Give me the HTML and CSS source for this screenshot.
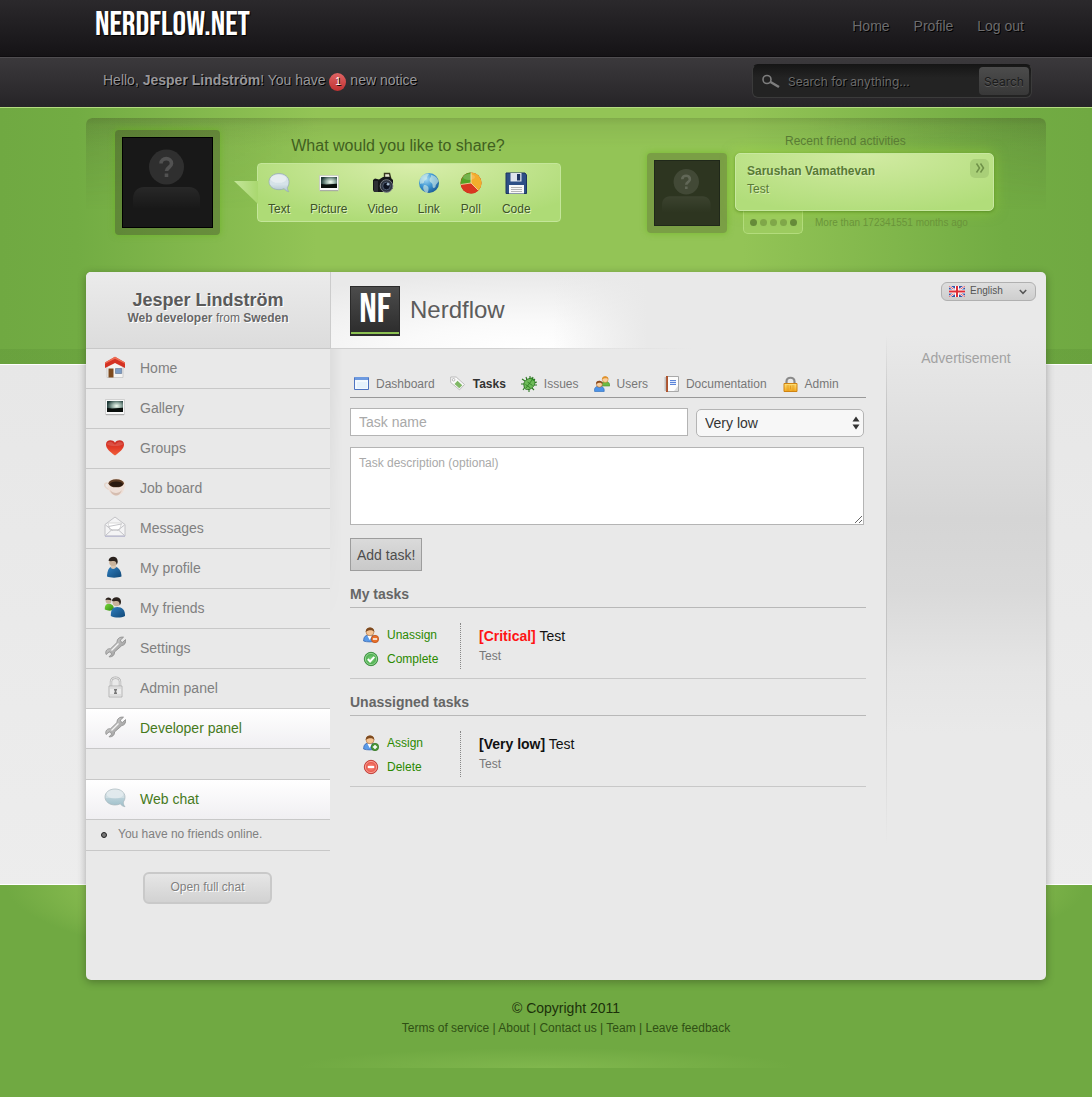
FILE: index.html
```html
<!DOCTYPE html>
<html lang="en">
<head>
<meta charset="utf-8">
<meta name="viewport" content="width=device-width, initial-scale=1">
<title>Nerdflow - Tasks</title>
<link rel="stylesheet" href="styles.css">
</head>
<body>
<svg class="sprite" width="0" height="0" aria-hidden="true">
  <defs>
    <linearGradient id="g-bubble" x2="0" y2="1"><stop offset="0" stop-color="#d3dfe3"/><stop offset=".5" stop-color="#cfdee3"/><stop offset=".52" stop-color="#b9d0d8"/><stop offset="1" stop-color="#9dbfca"/></linearGradient>
    <linearGradient id="g-bubble2" x2="0" y2="1"><stop offset="0" stop-color="#d5e0e6"/><stop offset=".6" stop-color="#d6e3e9"/><stop offset="1" stop-color="#adc2cc"/></linearGradient>
    <radialGradient id="g-photo" cx=".6" cy=".45" r=".6"><stop offset="0" stop-color="#f4fff4"/><stop offset=".5" stop-color="#8fa89f"/><stop offset="1" stop-color="#1f3a38"/></radialGradient>
    <radialGradient id="g-globe" cx=".35" cy=".3" r=".8"><stop offset="0" stop-color="#a8dcf5"/><stop offset=".5" stop-color="#3e96d2"/><stop offset="1" stop-color="#14538f"/></radialGradient>
    <linearGradient id="g-heart" x2="0" y2="1"><stop offset="0" stop-color="#c92a22"/><stop offset=".5" stop-color="#e23c28"/><stop offset="1" stop-color="#f0603a"/></linearGradient>
    <linearGradient id="g-blue" x2="1" y2="1"><stop offset="0" stop-color="#2f7fc0"/><stop offset="1" stop-color="#114877"/></linearGradient>
    <linearGradient id="g-green" x2="1" y2="1"><stop offset="0" stop-color="#7cd83c"/><stop offset="1" stop-color="#2f8a10"/></linearGradient>
    <linearGradient id="g-steel" x2="1" y2="1"><stop offset="0" stop-color="#e4e4e4"/><stop offset=".5" stop-color="#b4b4b4"/><stop offset="1" stop-color="#8f8f8f"/></linearGradient>
    <linearGradient id="g-gold" x2="0" y2="1"><stop offset="0" stop-color="#ffe27a"/><stop offset="1" stop-color="#f5a81d"/></linearGradient>
    <linearGradient id="g-body" x2="0" y2="1"><stop offset="0" stop-color="#fff" stop-opacity=".07"/><stop offset="1" stop-color="#fff" stop-opacity="0"/></linearGradient>
    <radialGradient id="g-ok"><stop offset="0" stop-color="#7ed07a"/><stop offset="1" stop-color="#3fa443"/></radialGradient>
    <radialGradient id="g-no"><stop offset="0" stop-color="#ff8d7d"/><stop offset="1" stop-color="#e04a40"/></radialGradient>
  </defs>
  <symbol id="i-bubble" viewBox="0 0 22 22"><path d="M11 2C5.500 2 1 5.400 1 10s4.500 8 10 8c2 0 3.800-.4 5.300-1.200 1 1.600 2.700 2.700 4.700 2.900-1.200-1.200-1.700-2.800-1.700-4.700 1.100-1.400 1.700-3.100 1.700-5C21 5.400 16.500 2 11 2z" fill="url(#g-bubble)" stroke="#a5b4ba" stroke-width=".7"/><ellipse cx="11" cy="7" rx="8.500" ry="4.500" fill="#fff" opacity=".35"/></symbol>
  <symbol id="i-bubble-light" viewBox="0 0 22 22"><path d="M11 1.500C5.500 1.500 1 5 1 9.700s4.500 8 10 8c2 0 3.700-.3 5.200-1 1.200 1.700 2.600 2.600 4.600 3-1-1.300-1.500-2.700-1.400-4.300 1.100-1.500 1.600-3.600 1.600-5.700 0-4.700-4.500-8.200-10-8.200z" fill="url(#g-bubble2)" stroke="#94a7b5" stroke-width=".7"/><ellipse cx="10.500" cy="6.800" rx="8" ry="4" fill="#fff" opacity=".4"/></symbol>
  <symbol id="i-photo" viewBox="0 0 22 22"><path d="M1.500 3.500h19v15h-19z" fill="#f9f9f9" stroke="#bcbcbc" stroke-width=".6"/><path d="M2 18.700h18" stroke="#999" stroke-width=".8"/><path d="M3 5h16v11H3z" fill="url(#g-photo)"/><path d="M3 12l5 .5 11-.8V16H3z" fill="#0a0f0d"/></symbol>
  <symbol id="i-camera" viewBox="0 0 22 22"><path d="M12.500 1.500h5l1 4h-6z" fill="#e8e8d8" stroke="#383820" stroke-width="1.400"/><path d="M1 8l2-1.500 4 1 4-2.500h7l3 3v8l-4 4H2l-1-2z" fill="#15161a"/><path d="M2 9h4v11H2z" fill="#2d2e34"/><circle cx="14.500" cy="14" r="6.300" fill="#303641" stroke="#777c84"/><circle cx="14.500" cy="14" r="3.800" fill="#0d1220" stroke="#4e5a70"/><circle cx="16" cy="12.200" r="1.300" fill="#a9bdd2"/></symbol>
  <symbol id="i-globe" viewBox="0 0 22 22"><circle cx="11" cy="11" r="10" fill="url(#g-globe)"/><path d="M3 5c3-3 6-3.500 8-3-1 2-2 2-2 4s-3 2-3 4-2 1-4 2c0-3-.3-5 1-7zM13 3c4 .3 6.500 3 7.500 6-1 3-3 3-3 6-2 2-3 1-3-2s-3-2-3-5 2-2 1.500-5zM6 13c3 0 5 2 4.500 4 0 2-.5 3-1.500 4-3-1-5-5-3-8z" fill="#dbf0e6" opacity=".6"/></symbol>
  <symbol id="i-pie" viewBox="0 0 22 22"><circle cx="11" cy="11" r="10.500" fill="#ba2812"/><path d="M11 11V.5A10.500 10.500 0 0 1 18.400 18.400z" fill="#f3ad2c"/><path d="M11 11V.5A10.500 10.500 0 0 0 .8 12.500z" fill="#55a325"/><path d="M11 11L.8 12.500A10.500 10.500 0 0 0 18.400 18.400z" fill="#d93720"/><path d="M11 11V.5M11 11L.8 12.500M11 11l7.400 7.400" stroke="#f7e6b0" stroke-width=".8"/><ellipse cx="9" cy="5" rx="6" ry="3" fill="#fff" opacity=".18"/></symbol>
  <symbol id="i-floppy" viewBox="0 0 22 22"><path d="M1 1h19l1.500 2v18.500H1z" fill="#2d4f86" stroke="#1d355f"/><path d="M5.500 1h11v8.500h-11z" fill="#dfe5ec"/><path d="M12 2h3.200v6.500H12z" fill="#1f3563"/><path d="M4 13h15v8.500H4z" fill="#f8f8f8"/><path d="M6 15.500h11M6 17.500h11M6 19.500h11" stroke="#b5b5b5"/></symbol>
  <symbol id="i-home" viewBox="0 0 22 22"><path d="M3 10l8-6 8 6v11.500H3z" fill="#f4f3f1" stroke="#bbb" stroke-width=".6"/><path d="M4.500 12.500h5v9h-5z" fill="#7d4a1e"/><path d="M11.500 12.500h6.200v5h-6.200z" fill="#7c9cc4" stroke="#5a6f8f" stroke-width=".6"/><path d="M11 .8L1 6.500V12l10-5 10 5V6.500z" fill="#d43223"/><path d="M11 .8L1 6.500v1.200L11 2.800l10 4.900V6.500z" fill="#ef6f56"/></symbol>
  <symbol id="i-heart" viewBox="0 0 22 22"><path d="M11 19.500C6 16 2 12.500 2 8.500c0-4.800 6.500-5.500 9-1.800 2.500-3.700 9-3 9 1.800 0 4-4 7.500-9 11z" fill="url(#g-heart)"/><path d="M3 8.500c0-3 4.500-3.700 6.500-1 .8 1.300 2.200 1.300 3 0 2-2.700 6.500-2 6.500 1-5 2-11 2-16 0z" fill="#fff" opacity=".15"/></symbol>
  <symbol id="i-cup" viewBox="0 0 22 22"><path d="M4.500 7.500C1 5.500-.5 9 2 11.500c1.500 1.500 4 2.500 6 2" fill="none" stroke="#e5d6cc" stroke-width="1.500"/><path d="M3.500 7.500c0 7.500 3.500 12 9 12s8.500-5 8.500-12z" fill="#eedfd7"/><path d="M6 14c3 4 9 4 12 0-1.500 4-3.500 5.500-5.700 5.500S7.300 18 6 14z" fill="#d5bdb0"/><ellipse cx="12.200" cy="7.500" rx="8.800" ry="5" fill="#f2e5dc"/><ellipse cx="12.200" cy="7.300" rx="7.700" ry="4" fill="#5c3a22"/><ellipse cx="12.400" cy="8.300" rx="6.500" ry="2.800" fill="#2b190e"/></symbol>
  <symbol id="i-mail" viewBox="0 0 22 22"><path d="M1 8.500L11 1l10 7.500V20H1z" fill="#f4f4f5" stroke="#bdbdc2" stroke-width=".9"/><path d="M4 7h13.500l-2 7H6z" fill="#fff" stroke="#ccc" stroke-width=".7"/><path d="M4.500 10.500l13-2.500M1.500 9l7 5.500M20.500 9l-7 5.500M1.500 19.500l6-5.500h7l6 5.500" fill="none" stroke="#bdbdc2" stroke-width=".9"/><path d="M1 20.200h20" stroke="#b4b4d0"/></symbol>
  <symbol id="i-user" viewBox="0 0 22 22"><path d="M3 20.500c0-3 1-8 3.500-9.500h6c3.500 1.500 5 6 5 9.500-4 1.500-11 1.500-14.500 0z" fill="url(#g-blue)"/><path d="M6.500 11c1 2.500 4 2.500 6 0l-1-3h-4z" fill="#d8c6b2"/><circle cx="9" cy="6" r="3.900" fill="#c9b39c"/><path d="M4.500 4.800C5-.2 13.500-.8 13.700 5.200c0 2-.7 3-1.200 3.500 0-2.500-.8-3.700-2.700-3.700-2 0-3.300.4-5.300-.2z" fill="#2b221d"/></symbol>
  <symbol id="i-friends" viewBox="0 0 22 22"><path d="M.8 13.500C.8 9.500 2 7.800 5 7.800s5 2.200 5 5.700c-2.500 1.500-6.500 1.500-9.200 0z" fill="url(#g-green)"/><circle cx="4.500" cy="5" r="2.800" fill="#c9b39c"/><path d="M1.500 4.300c0-4 6-3.800 6 .3-2-.8-4-1.200-6-.3z" fill="#2b221d"/><path d="M6.800 20c0-6 1.700-9 6.500-9s8 3 7.700 9c-4 2-10 2-14.200 0z" fill="url(#g-blue)"/><circle cx="12.500" cy="6.300" r="3.900" fill="#c9b39c"/><path d="M8 5C8 0 17 0 17 5.800c0 2-.8 3-1.300 3.500 0-3-1-4.300-3-4.300-2 0-2.700.4-4.700 0z" fill="#2b221d"/></symbol>
  <symbol id="i-wrench" viewBox="0 0 22 22"><path d="M19.500 1.200l-3.200 3 .7 1.600 1.500.6 3-2.800c.7 3.200-1 5.700-3.700 6L10.500 16c.3 3-2.300 5.300-5.500 4.800l2.600-2.600-.8-1.700-1.700-.6-3 2.600c-1.300-3.500 1.200-6.200 4.500-5.800L13 6.500C12.800 2.700 16 .5 19.500 1.200z" fill="url(#g-steel)" stroke="#8a8a8a" stroke-width=".8"/><path d="M7.500 14.500l7-7" stroke="#f4f4f4" stroke-width="1.200"/></symbol>
  <symbol id="i-lock" viewBox="0 0 22 22"><path d="M7 10V5.500c0-5 9-5 9 0V10" fill="none" stroke="#b0b0b0" stroke-width="2.400"/><path d="M7 10V5.500c0-5 9-5 9 0V10" fill="none" stroke="#eee" stroke-width="1"/><path d="M5 10h13v11H5z" fill="#ececec" stroke="#a9a9a9" stroke-width=".8"/><path d="M6 12h11M6 19h11" stroke="#cfcfcf"/><path d="M10 13h3v1.500h-.7v2h.7V18h-3v-1.500h.7v-2H10z" fill="#777"/></symbol>
  <symbol id="i-window" viewBox="0 0 16 16"><path d="M1.500 1.500h14v12h-14z" fill="#f3f9fe" stroke="#4d74c2"/><path d="M2 1h13v3H2z" fill="#6d9ae0"/><path d="M4 6h10v6H4z" fill="#dcecfa" opacity=".6"/></symbol>
  <symbol id="i-tag" viewBox="0 0 16 16"><path d="M.7 1h5.500l8.300 7.500-5 5.300L.7 6.500z" fill="#fafafa" stroke="#b5b5b5" stroke-width=".9"/><circle cx="3.600" cy="3.800" r="1.300" fill="#fff" stroke="#aaa" stroke-width=".8"/><path d="M7.500 4.700l4.800 4.600-3 3-4.800-4.300z" fill="#7fb765"/></symbol>
  <symbol id="i-bug" viewBox="0 0 16 16"><path d="M1 3l3 2M0 8h3M2 14l2-3M8 16v-3M13 14l-2-2M16 9h-3M14 3l-2 2M9 0v3M5 1l1 3M12 1l-1 3M16 6l-3 1" stroke="#2d7a22" stroke-width="1.100"/><path d="M3 10c-1-5 3-7.500 8-8 3 2 3.500 4 2.500 6.500C12 12 9 14 5.500 13.500 4 13 3.200 12 3 10z" fill="#6dbb58" stroke="#1f6518" stroke-width=".8"/><path d="M5 12l6-8M4.500 8.500l5 3.500M6.500 6l5 3.500" stroke="#2b7a22" stroke-width=".8"/><path d="M9 2.500c2-.8 4 .5 4.500 3z" fill="#2c8a22"/></symbol>
  <symbol id="i-users" viewBox="0 0 16 16"><path d="M7 10c0-3 1-4.500 4.300-4.500 3 0 4.700 1.500 4.500 4.500z" fill="#6cb944" stroke="#47902a" stroke-width=".6"/><circle cx="11.200" cy="3.600" r="2.900" fill="#f9cf9e" stroke="#c97d20" stroke-width=".5"/><path d="M8 3.600C7.500-.8 14.500-1 14.500 3.400c-1-1.500-4.500-1.500-6.500.2z" fill="#e0912a"/><path d="M.6 15.500c-.6-4 1.400-5.300 4.600-5.300s5.400 1.300 5 5.300z" fill="#4c93e8" stroke="#2768b9" stroke-width=".6"/><circle cx="5.400" cy="8.300" r="3" fill="#f9cf9e" stroke="#8c4a1d" stroke-width=".5"/><path d="M2 8.300c-.6-4.600 7-4.600 6.700 0-1.500-2-4.500-2-6.700 0z" fill="#8c4a1d"/></symbol>
  <symbol id="i-doc" viewBox="0 0 16 16"><path d="M3.500.5h12v15h-12z" fill="#fcfcfc" stroke="#a9a9a9"/><path d="M3 0h2v16H3z" fill="#b0522a"/><path d="M1.500 2h2M1.500 4h2M1.500 6h2M1.500 8h2M1.500 10h2M1.500 12h2M1.500 14h2" stroke="#888" stroke-width=".8"/><path d="M7 4h6v5H7z" fill="#5b84d8"/><path d="M7 5.500h6M7 7.500h6" stroke="#dbe6fb"/><path d="M11 15l4-5v5z" fill="#ddd"/></symbol>
  <symbol id="i-padlock" viewBox="0 0 16 16"><path d="M4.500 8V5.500c0-5 8-5 8 0V8" fill="none" stroke="#8a8a8a" stroke-width="2.200"/><path d="M2 7.500h13v8H2z" fill="url(#g-gold)" stroke="#cf8312"/><path d="M4.500 10h3M9.500 10h3M4.500 12h3M9.500 12h3M4.500 14h3M9.500 14h3M8.500 9.500v4" stroke="#e0981c" stroke-width=".9"/></symbol>
  <symbol id="i-man" viewBox="0 0 16 16"><path d="M.6 14c0-4.500 2-6 6-6s6 2 6 6c-3 1.200-9 1.200-12 0z" fill="#5b9be8" stroke="#2c5fae" stroke-width=".7"/><path d="M4.300 8.500L6.700 13l2.400-4.500z" fill="#fff"/><circle cx="7" cy="4.800" r="4" fill="#f6c594" stroke="#a66a35" stroke-width=".6"/><path d="M2.800 5C2-1 12-1 11.200 5c-.8-2-6-2.500-8.400 0z" fill="#7d4a20"/></symbol>
  <symbol id="i-unassign" viewBox="0 0 16 16"><use href="#i-man"/><circle cx="12" cy="12" r="3.700" fill="#e8702a" stroke="#b94c12" stroke-width=".7"/><path d="M9.900 12h4.200" stroke="#fff" stroke-width="1.500"/></symbol>
  <symbol id="i-assign" viewBox="0 0 16 16"><use href="#i-man"/><circle cx="12" cy="12" r="3.700" fill="#4f9a3a" stroke="#2f6f20" stroke-width=".7"/><path d="M9.900 12h4.200M12 9.900v4.200" stroke="#fff" stroke-width="1.500"/></symbol>
  <symbol id="i-ok" viewBox="0 0 16 16"><circle cx="8" cy="8" r="6.700" fill="url(#g-ok)" stroke="#3a8a3e" stroke-width=".9"/><circle cx="8" cy="8" r="5.600" fill="none" stroke="#b5e6b0" stroke-width=".7"/><path d="M4.800 8l2.300 2.500 4.200-4.700" fill="none" stroke="#fff" stroke-width="2"/></symbol>
  <symbol id="i-no" viewBox="0 0 16 16"><circle cx="8" cy="8" r="6.700" fill="url(#g-no)" stroke="#c03a34" stroke-width=".9"/><circle cx="8" cy="8" r="5.600" fill="none" stroke="#ffc0b5" stroke-width=".7"/><path d="M4.800 8h6.400" stroke="#fff" stroke-width="2.200"/></symbol>
  <symbol id="i-flag" viewBox="0 0 16 11"><path d="M0 0h16v11H0z" fill="#3455a8"/><path d="M0 0l16 11M16 0L0 11" stroke="#fff" stroke-width="2.200"/><path d="M0 0l16 11M16 0L0 11" stroke="#dd3a44" stroke-width=".8"/><path d="M8 0v11M0 5.500h16" stroke="#fff" stroke-width="4"/><path d="M8 0v11M0 5.500h16" stroke="#de2d38" stroke-width="2"/></symbol>
  <symbol id="i-search" viewBox="0 0 18 15"><circle cx="5" cy="5.500" r="4" fill="none" stroke="#7e7e7e" stroke-width="1.600"/><path d="M8.500 8l8.500 5" stroke="#7e7e7e" stroke-width="2.600"/></symbol>
  <symbol id="i-person" viewBox="0 0 91 91"><circle cx="44.500" cy="30" r="17.500" fill="#fff" fill-opacity=".1"/><path d="M11 72V62c0-7 4-12 11-12h45c7 0 11 5 11 12v10z" fill="url(#g-body)"/><path d="M39 26.500c0-6.500 10.500-6.500 10.500 0 0 4-5 4-5 7.500M44.500 36.500v3.500" fill="none" stroke="#fff" stroke-opacity=".17" stroke-width="3.600"/></symbol>
</svg>

<header class="topbar">
  <div class="wrap topbar-row">
    <a class="wordmark" href="#">NERDFLOW.NET</a>
    <nav class="topnav" aria-label="Account">
      <a href="#">Home</a>
      <a href="#">Profile</a>
      <a href="#">Log out</a>
    </nav>
  </div>
</header>

<div class="subbar">
  <div class="wrap subbar-row">
    <p class="greeting">Hello, <b>Jesper Lindström</b>! You have <a class="badge" href="#">1</a> new notice</p>
    <form class="search" role="search">
      <svg width="18" height="15" aria-hidden="true"><use href="#i-search"/></svg>
      <input type="search" aria-label="Search" placeholder="Search for anything...">
      <button type="button">Search</button>
    </form>
  </div>
</div>

<div class="stage">
  <section class="wrap hero">
    <div class="avatar"><svg width="91" height="91" aria-hidden="true"><use href="#i-person"/></svg></div>
    <div class="share">
      <h2>What would you like to share?</h2>
      <div class="share-box">
        <a href="#"><svg width="22" height="22"><use href="#i-bubble-light"/></svg>Text</a>
        <a href="#"><svg width="22" height="22"><use href="#i-photo"/></svg>Picture</a>
        <a href="#"><svg width="22" height="22"><use href="#i-camera"/></svg>Video</a>
        <a href="#"><svg width="22" height="22"><use href="#i-globe"/></svg>Link</a>
        <a href="#"><svg width="22" height="22"><use href="#i-pie"/></svg>Poll</a>
        <a href="#"><svg width="22" height="22"><use href="#i-floppy"/></svg>Code</a>
      </div>
    </div>
    <div class="recent">
      <h2>Recent friend activities</h2>
      <div class="recent-row">
        <div class="avatar avatar-small"><svg width="66" height="66" aria-hidden="true"><use href="#i-person"/></svg></div>
        <div class="activity">
          <div class="activity-card">
            <div>
              <b>Sarushan Vamathevan</b>
              <p>Test</p>
            </div>
            <button type="button" aria-label="Next activity"><svg width="10" height="10" viewBox="0 0 10 10"><path d="M1.500.5L4.500 5l-3 4.500M5.500.5L8.500 5l-3 4.500" fill="none" stroke="#6f9148" stroke-width="1.500"/></svg></button>
          </div>
          <div class="activity-foot">
            <span class="dots"><i class="on"></i><i></i><i></i><i></i><i class="on"></i></span>
            <small>More than 172341551 months ago</small>
          </div>
        </div>
      </div>
    </div>
  </section>

  <div class="wrap panel">
    <aside class="sidebar">
      <div class="profile">
        <h1>Jesper Lindström</h1>
        <p><b>Web developer</b> from <b>Sweden</b></p>
      </div>
      <nav class="menu" aria-label="Main">
        <a href="#"><svg width="22" height="22"><use href="#i-home"/></svg>Home</a>
        <a href="#"><svg width="22" height="22"><use href="#i-photo"/></svg>Gallery</a>
        <a href="#"><svg width="22" height="22"><use href="#i-heart"/></svg>Groups</a>
        <a href="#"><svg width="22" height="22"><use href="#i-cup"/></svg>Job board</a>
        <a href="#"><svg width="22" height="22"><use href="#i-mail"/></svg>Messages</a>
        <a href="#"><svg width="22" height="22"><use href="#i-user"/></svg>My profile</a>
        <a href="#"><svg width="22" height="22"><use href="#i-friends"/></svg>My friends</a>
        <a href="#"><svg width="22" height="22"><use href="#i-wrench"/></svg>Settings</a>
        <a href="#"><svg width="22" height="22"><use href="#i-lock"/></svg>Admin panel</a>
        <a class="active" href="#"><svg width="22" height="22"><use href="#i-wrench"/></svg>Developer panel</a>
      </nav>
      <div class="menu chat">
        <a class="active" href="#"><svg width="22" height="22"><use href="#i-bubble"/></svg>Web chat</a>
        <p class="status">You have no friends online.</p>
        <button type="button">Open full chat</button>
      </div>
    </aside>

    <main class="content">
      <div class="project">
        <span class="project-logo">NF</span>
        <h2>Nerdflow</h2>
      </div>
      <nav class="tabs" aria-label="Project">
        <a href="#"><svg width="16" height="16"><use href="#i-window"/></svg>Dashboard</a>
        <a class="active" href="#"><svg width="16" height="16"><use href="#i-tag"/></svg>Tasks</a>
        <a href="#"><svg width="16" height="16"><use href="#i-bug"/></svg>Issues</a>
        <a href="#"><svg width="16" height="16"><use href="#i-users"/></svg>Users</a>
        <a href="#"><svg width="16" height="16"><use href="#i-doc"/></svg>Documentation</a>
        <a href="#"><svg width="16" height="16"><use href="#i-padlock"/></svg>Admin</a>
      </nav>
      <form class="task-form">
        <div class="task-line">
          <input type="text" aria-label="Task name" placeholder="Task name">
          <div class="priority">
            <select aria-label="Priority"><option>Very low</option><option>Critical</option></select>
            <svg width="8" height="14" viewBox="0 0 8 14" aria-hidden="true"><path d="M4 .5L7.500 5.500h-7zM4 13.500L.5 8.500h7z" fill="#333"/></svg>
          </div>
        </div>
        <textarea aria-label="Task description" placeholder="Task description (optional)"></textarea>
        <button type="button">Add task!</button>
      </form>

      <section class="tasks">
        <h3>My tasks</h3>
        <article class="task">
          <div class="task-actions">
            <a href="#"><svg width="16" height="16"><use href="#i-unassign"/></svg>Unassign</a>
            <a href="#"><svg width="16" height="16"><use href="#i-ok"/></svg>Complete</a>
          </div>
          <div class="task-text">
            <h4><b class="critical">[Critical]</b> Test</h4>
            <p>Test</p>
          </div>
        </article>
      </section>
      <section class="tasks">
        <h3>Unassigned tasks</h3>
        <article class="task">
          <div class="task-actions">
            <a href="#"><svg width="16" height="16"><use href="#i-assign"/></svg>Assign</a>
            <a href="#"><svg width="16" height="16"><use href="#i-no"/></svg>Delete</a>
          </div>
          <div class="task-text">
            <h4><b>[Very low]</b> Test</h4>
            <p>Test</p>
          </div>
        </article>
      </section>
    </main>

    <aside class="side">
      <div class="language">
        <svg width="16" height="11" aria-hidden="true"><use href="#i-flag"/></svg>
        <select aria-label="Language"><option>English</option><option>Svenska</option></select>
        <svg width="8" height="6" viewBox="0 0 8 6" aria-hidden="true"><path d="M.8 1l3.200 3.300L7.200 1" fill="none" stroke="#555" stroke-width="1.500"/></svg>
      </div>
      <div class="ad">Advertisement</div>
    </aside>
  </div>

  <footer class="wrap footer">
    <p class="copyright">© Copyright 2011</p>
    <p class="legal"><a href="#">Terms of service</a> | <a href="#">About</a> | <a href="#">Contact us</a> | <a href="#">Team</a> | <a href="#">Leave feedback</a></p>
  </footer>
</div>
</body>
</html>
```
FILE: styles.css
```css
*, ::before { box-sizing: border-box; }

body {
  margin: 0;
  min-height: 100vh;
  display: flex;
  flex-direction: column;
  background: #70a942;
  color: #777;
  font: 14px/20px Arial, "Liberation Sans", sans-serif;
}

h1, h2, h3, h4, p { margin: 0; font-weight: normal; }
a { color: inherit; text-decoration: none; }
button, input, select, textarea { font: inherit; color: inherit; margin: 0; }
button { cursor: pointer; }
svg { flex: none; display: block; }
.sprite { position: absolute; }

.wrap {
  width: calc(100% - 132px);
  max-width: 960px;
  margin: 0 auto;
  position: relative;
  left: 20px;
}

/* Header bars */
.topbar {
  background: linear-gradient(#2b292c, #151316);
  border-bottom: 1px solid #0e0c0f;
}
.topbar-row {
  display: flex;
  justify-content: space-between;
  height: 56px;
  padding: 0 22px 0 9px;
}
.wordmark {
  color: #fff;
  font: 34px/50px "Bebas Neue", "Roboto Condensed", "Open Sans Condensed", "Liberation Sans Narrow", "Liberation Sans", sans-serif;
  text-shadow: 1px 1px 1px #000;
}
.topnav {
  display: flex;
  gap: 24px;
  padding-top: 16px;
  color: #6d6c6e;
  text-shadow: 1px 1px 0 #000;
}
.subbar {
  background: linear-gradient(#3b393c, #262427);
  border-top: 1px solid #4f4d50;
  border-bottom: 1px solid #b4dc80;
}
.subbar-row {
  display: flex;
  justify-content: space-between;
  align-items: flex-start;
  height: 49px;
  padding: 6px 14px 0 17px;
}
.greeting {
  padding-top: 6px;
  color: #98979a;
  text-shadow: 1px 1px 0 #000;
}
.badge {
  display: inline-block;
  width: 17px;
  height: 18px;
  border-radius: 50%;
  background: linear-gradient(#e06464, #c03232);
  color: #fff;
  font-size: 10px;
  line-height: 17px;
  text-align: center;
}
.search {
  display: flex;
  align-items: center;
  width: 280px;
  height: 34px;
  padding: 0 2px 0 9px;
  border: 1px solid #3b3b3b;
  border-top-color: #151515;
  border-radius: 6px;
  background: linear-gradient(#161616, #232323 40%);
  font: 12px/16px Inter, sans-serif;
}
.search input {
  flex: 1;
  min-width: 0;
  padding: 1px 8px 0;
  border: 0;
  outline: 0;
  background: none;
  color: #999;
}
.search input::placeholder { color: #6b6b6b; opacity: 1; text-shadow: 1px 1px 0 #000; }
.search button {
  width: 50px;
  height: 28px;
  padding: 1px 0 0;
  border: 0;
  border-radius: 4px;
  background: linear-gradient(#4c4c4c, #383838);
  color: #1a1a1a;
  text-shadow: 0 1px 0 #5a5a5a;
}

/* Coloured bands behind the page */
.stage {
  flex: 1;
  background:
    radial-gradient(ellipse 250px 20px at 50% 100%, rgba(160, 210, 100, .35), transparent) 50% calc(100% - 29px) / 520px 20px no-repeat,
    linear-gradient(rgba(0, 40, 0, .06), rgba(0, 40, 0, .06)) 0 241px / 100% 15px no-repeat,
    linear-gradient(90deg, #70a942, #72ac43 7%, #93c456 29%, #93c456 68%, #72ac43 92%, #70a942) 0 0 / 100% 256px no-repeat,
    radial-gradient(ellipse 540px 100px at 50% 0, #93c456 75%, #70a942) 0 100% / 100% 212px no-repeat,
    linear-gradient(#fff, #fff) 0 100% / 100% 213px no-repeat,
    linear-gradient(#fff 257px, #e7e7e7 257px, #ebebeb 600px, #efefef);
}

/* Share and activity strip */
.hero {
  display: flex;
  align-items: flex-start;
  height: 154px;
  margin-top: 10px;
  padding: 12px 52px 0 29px;
}
.hero::before {
  content: "";
  position: absolute;
  inset: 0;
  border-radius: 6px 6px 0 0;
  background:
    linear-gradient(rgba(60, 70, 30, .2), rgba(60, 70, 30, .08) 8px, transparent 30px),
    linear-gradient(90deg, rgba(60, 70, 40, .18), transparent 25%, transparent 75%, rgba(60, 70, 40, .18));
  -webkit-mask-image: linear-gradient(#000, transparent 60%);
  mask-image: linear-gradient(#000, transparent 60%);
}
.hero > * { position: relative; }
.avatar {
  padding: 7px;
  border-radius: 4px;
  background: rgba(65, 80, 35, .42);
  box-shadow: 0 0 6px rgba(100, 180, 20, .6);
}
.avatar svg { background: #181818; outline: 1px solid #000; outline-offset: -1px; }
.avatar-small { align-self: flex-start; background: rgba(85, 105, 45, .4); }
.avatar-small svg { background: #2d3520; outline-color: #20281a; }
.share { width: 304px; margin-left: 37px; padding-top: 6px; }
.share h2 {
  margin-bottom: 7px;
  padding-right: 22px;
  color: #41601f;
  font-size: 16px;
  text-align: center;
}
.share-box {
  position: relative;
  display: flex;
  gap: 20px;
  height: 59px;
  padding: 8px 0 0 10px;
  border: 1px solid #c4e69a;
  border-radius: 4px;
  background: radial-gradient(ellipse 190px 60px at 52% 0, #d9eeac, #aedb76);
  color: #3c5426;
  font-size: 12px;
  line-height: 16px;
  text-shadow: 1px 1px 0 #dff2c0;
}
.share-box::before {
  content: "";
  position: absolute;
  left: -24px;
  top: 17px;
  width: 24px;
  height: 23px;
  background: linear-gradient(90deg, #c4e69a, #a9d76f);
  clip-path: polygon(0 0, 100% 0, 100% 100%);
}
.share-box a { display: flex; flex-direction: column; align-items: center; gap: 7px; }
.recent { margin-left: auto; padding-top: 3px; color: #587a35; font-size: 12px; line-height: 16px; }
.recent h2 { margin-bottom: 4px; padding-left: 138px; font-size: 12px; }
.recent-row { display: flex; gap: 8px; }
.activity { width: 259px; }
.activity-card {
  position: relative;
  display: flex;
  justify-content: space-between;
  align-items: flex-start;
  height: 58px;
  padding: 5px 4px 0 11px;
  border: 1px solid #c8e8a0;
  border-radius: 5px;
  background: radial-gradient(ellipse 190px 60px at 50% 0, #d2eba3, #b1dd7a);
  box-shadow: 0 1px 3px rgba(50, 100, 10, .5), 0 0 14px rgba(160, 220, 50, .5);
  text-shadow: 1px 1px 0 #d9efb8;
}
.activity-card div { padding-top: 3px; line-height: 18px; }
.activity-card button {
  display: grid;
  place-items: center;
  width: 19px;
  height: 19px;
  padding: 0 0 2px;
  border: 0;
  border-radius: 5px;
  background: #a9cf78;
}
.activity-foot { display: flex; gap: 12px; padding-left: 8px; }
.dots {
  display: flex;
  justify-content: center;
  align-items: center;
  gap: 3px;
  width: 60px;
  height: 23px;
  border: 1px solid #b3dc7c;
  border-top: 0;
  border-radius: 0 0 5px 5px;
  background: #9ccb5f;
}
.dots i { width: 7px; height: 7px; border-radius: 50%; background: #7fa74a; }
.dots .on { background: #658a3a; }
.activity-foot small { padding-top: 4px; color: #6a933b; font-size: 10px; }

/* Main panel */
.panel {
  display: flex;
  border-radius: 5px;
  background: #e9e9e9;
  box-shadow: 0 2px 8px rgba(0, 0, 0, .3);
}
.sidebar { width: 244px; flex: none; padding-bottom: 76px; }
.profile {
  height: 77px;
  padding-top: 18px;
  border-bottom: 1px solid #c8c8c8;
  border-radius: 5px 0 0 0;
  background: linear-gradient(#ebebeb, #dcdcdc);
  color: #666;
  font-size: 12px;
  line-height: 16px;
  text-align: center;
  text-shadow: 1px 1px 0 #fff;
}
.profile h1 { color: #5a5a5a; font-size: 18px; font-weight: bold; line-height: 20px; }
.menu a {
  display: flex;
  align-items: center;
  gap: 14px;
  height: 40px;
  padding: 0 18px 2px;
  border-bottom: 1px solid #c8c8c8;
  color: #808080;
}
.menu svg { margin-bottom: 2px; }
.menu .active { background: linear-gradient(#fff, #f0eff2); color: #467a1c; }
.chat { margin-top: 30px; border-top: 1px solid #c8c8c8; }
.status {
  position: relative;
  height: 31px;
  padding: 6px 0 0 32px;
  border-bottom: 1px solid #c8c8c8;
  color: #808080;
  font-size: 12px;
  line-height: 16px;
}
.status::before {
  content: "";
  position: absolute;
  left: 15px;
  top: 12px;
  width: 6px;
  height: 6px;
  border: 1px solid #222;
  border-radius: 50%;
  background: #777;
}
.chat button {
  display: block;
  width: 129px;
  height: 32px;
  margin: 21px 0 0 57px;
  padding: 0 0 3px;
  border: 2px solid #c9c9c9;
  border-radius: 6px;
  background: linear-gradient(#e6e6e6, #d2d2d2);
  color: #808080;
  font-size: 12px;
  line-height: 16px;
  text-shadow: 1px 1px 0 #fff;
}

.content {
  position: relative;
  flex: 1;
  min-width: 0;
  padding: 0 20px;
}
.content::before {
  content: "";
  position: absolute;
  left: 0;
  top: 0;
  width: 12px;
  height: 350px;
  background: linear-gradient(90deg, rgba(0, 0, 0, .05), transparent);
  -webkit-mask-image: linear-gradient(#000 30%, transparent);
  mask-image: linear-gradient(#000 30%, transparent);
}
.project {
  position: relative;
  display: flex;
  gap: 10px;
  height: 77px;
  margin: 0 -20px;
  padding: 14px 20px 0 19px;
  border-left: 1px solid #ccc;
  background:
    linear-gradient(90deg, #d0d0d0 30%, transparent 65%) 0 100% / 100% 1px no-repeat,
    linear-gradient(90deg, transparent 40%, #e9e9e9 57%),
    radial-gradient(ellipse 340px 76px at 35% 100%, #fff, #fafafa 35%, #e9e9e9);
}
.project-logo {
  width: 50px;
  height: 50px;
  border: 1px solid #2b2b2b;
  background: linear-gradient(#4c4c4c, #2b2b2b);
  box-shadow: inset 0 -1px 0 #2b2b2b, inset 0 -3px 0 #8cc152;
  color: #fff;
  font: 41px/46px "Bebas Neue", "Roboto Condensed", "Open Sans Condensed", "Liberation Sans Narrow", "Liberation Sans", sans-serif;
  text-align: center;
}
.project h2 { color: #5c5c5c; font-size: 24px; line-height: 48px; }
.tabs {
  display: flex;
  gap: 15px;
  margin-top: 26px;
  padding: 0 3px 4px;
  border-bottom: 1px solid #999;
  font-size: 12px;
  line-height: 18px;
}
.tabs a { display: flex; align-items: center; gap: 7px; }
.tabs .active { color: #333; font-weight: bold; }

.task-form { padding-top: 10px; }
.task-line { display: flex; gap: 8px; padding-right: 2px; }
.task-line input {
  flex: 1;
  min-width: 0;
  height: 28px;
  padding: 0 8px;
  border: 1px solid #b4b4b4;
  background: #fff;
}
.task-form ::placeholder { color: #a9a9a9; opacity: 1; }
.priority { position: relative; width: 168px; padding-top: 1px; }
.priority select {
  width: 100%;
  height: 28px;
  padding: 0 8px;
  border: 1px solid #b4b4b4;
  border-radius: 5px;
  background: #f7f7f7;
  color: #333;
  appearance: none;
}
.priority svg { position: absolute; right: 4px; top: 8px; pointer-events: none; }
.task-form textarea {
  display: block;
  width: calc(100% - 2px);
  height: 78px;
  margin-top: 10px;
  padding: 7px 8px;
  border: 1px solid #b4b4b4;
  background: #fff;
  font-size: 12px;
  line-height: 16px;
}
.task-form button {
  display: block;
  height: 33px;
  margin: 13px 0;
  padding: 0 6px;
  border: 1px solid #9d9d9d;
  background: linear-gradient(#dadada, #c9c9c9);
  color: #4d4d4d;
}

.tasks h3 {
  height: 24px;
  border-bottom: 1px solid #b8b8b8;
  color: #666;
  font-size: 14px;
  font-weight: bold;
}
.task {
  display: flex;
  gap: 18px;
  height: 71px;
  margin-bottom: 13px;
  padding-top: 15px;
  border-bottom: 1px solid #c8c8c8;
}
.task-actions {
  display: flex;
  flex-direction: column;
  gap: 8px;
  width: 111px;
  height: 46px;
  padding: 4px 0 0 13px;
  border-right: 1px dotted #888;
  color: #2b8a00;
  font-size: 12px;
  line-height: 16px;
}
.task-actions a { display: flex; gap: 8px; }
.task-text { padding-top: 3px; font-size: 12px; }
.task-text h4 { color: #111; font-size: 14px; }
.critical { color: #ff1414; }

/* Right column */
.side { width: 160px; flex: none; }
.language {
  display: flex;
  align-items: center;
  width: 95px;
  height: 19px;
  margin: 10px 10px 0 auto;
  padding: 0 8px 0 7px;
  border: 1px solid #b0b0b0;
  border-radius: 6px;
  background: linear-gradient(#dedede, #cecece);
  color: #555;
}
.language select {
  flex: 1;
  min-width: 0;
  padding: 0 0 2px 5px;
  border: 0;
  background: none;
  font-size: 10px;
  line-height: 14px;
  appearance: none;
}
.ad {
  height: 510px;
  margin-top: 34px;
  padding-top: 13px;
  background:
    linear-gradient(transparent, #c4c4c4 15%, #c4c4c4 60%, transparent) 0 0 / 1px 100% no-repeat,
    linear-gradient(#e9e9e9, #dedede 20%, #d5d5d5 36%, #d9d9d9 50%, #e5e5e5 66%, #e9e9e9 78%);
  color: #a2a2a2;
  text-align: center;
}

/* Footer */
.footer {
  padding: 18px 0 59px;
  color: #2f5014;
  font-size: 12px;
  text-align: center;
}
.copyright { color: #1c310a; font-size: 14px; }
```
